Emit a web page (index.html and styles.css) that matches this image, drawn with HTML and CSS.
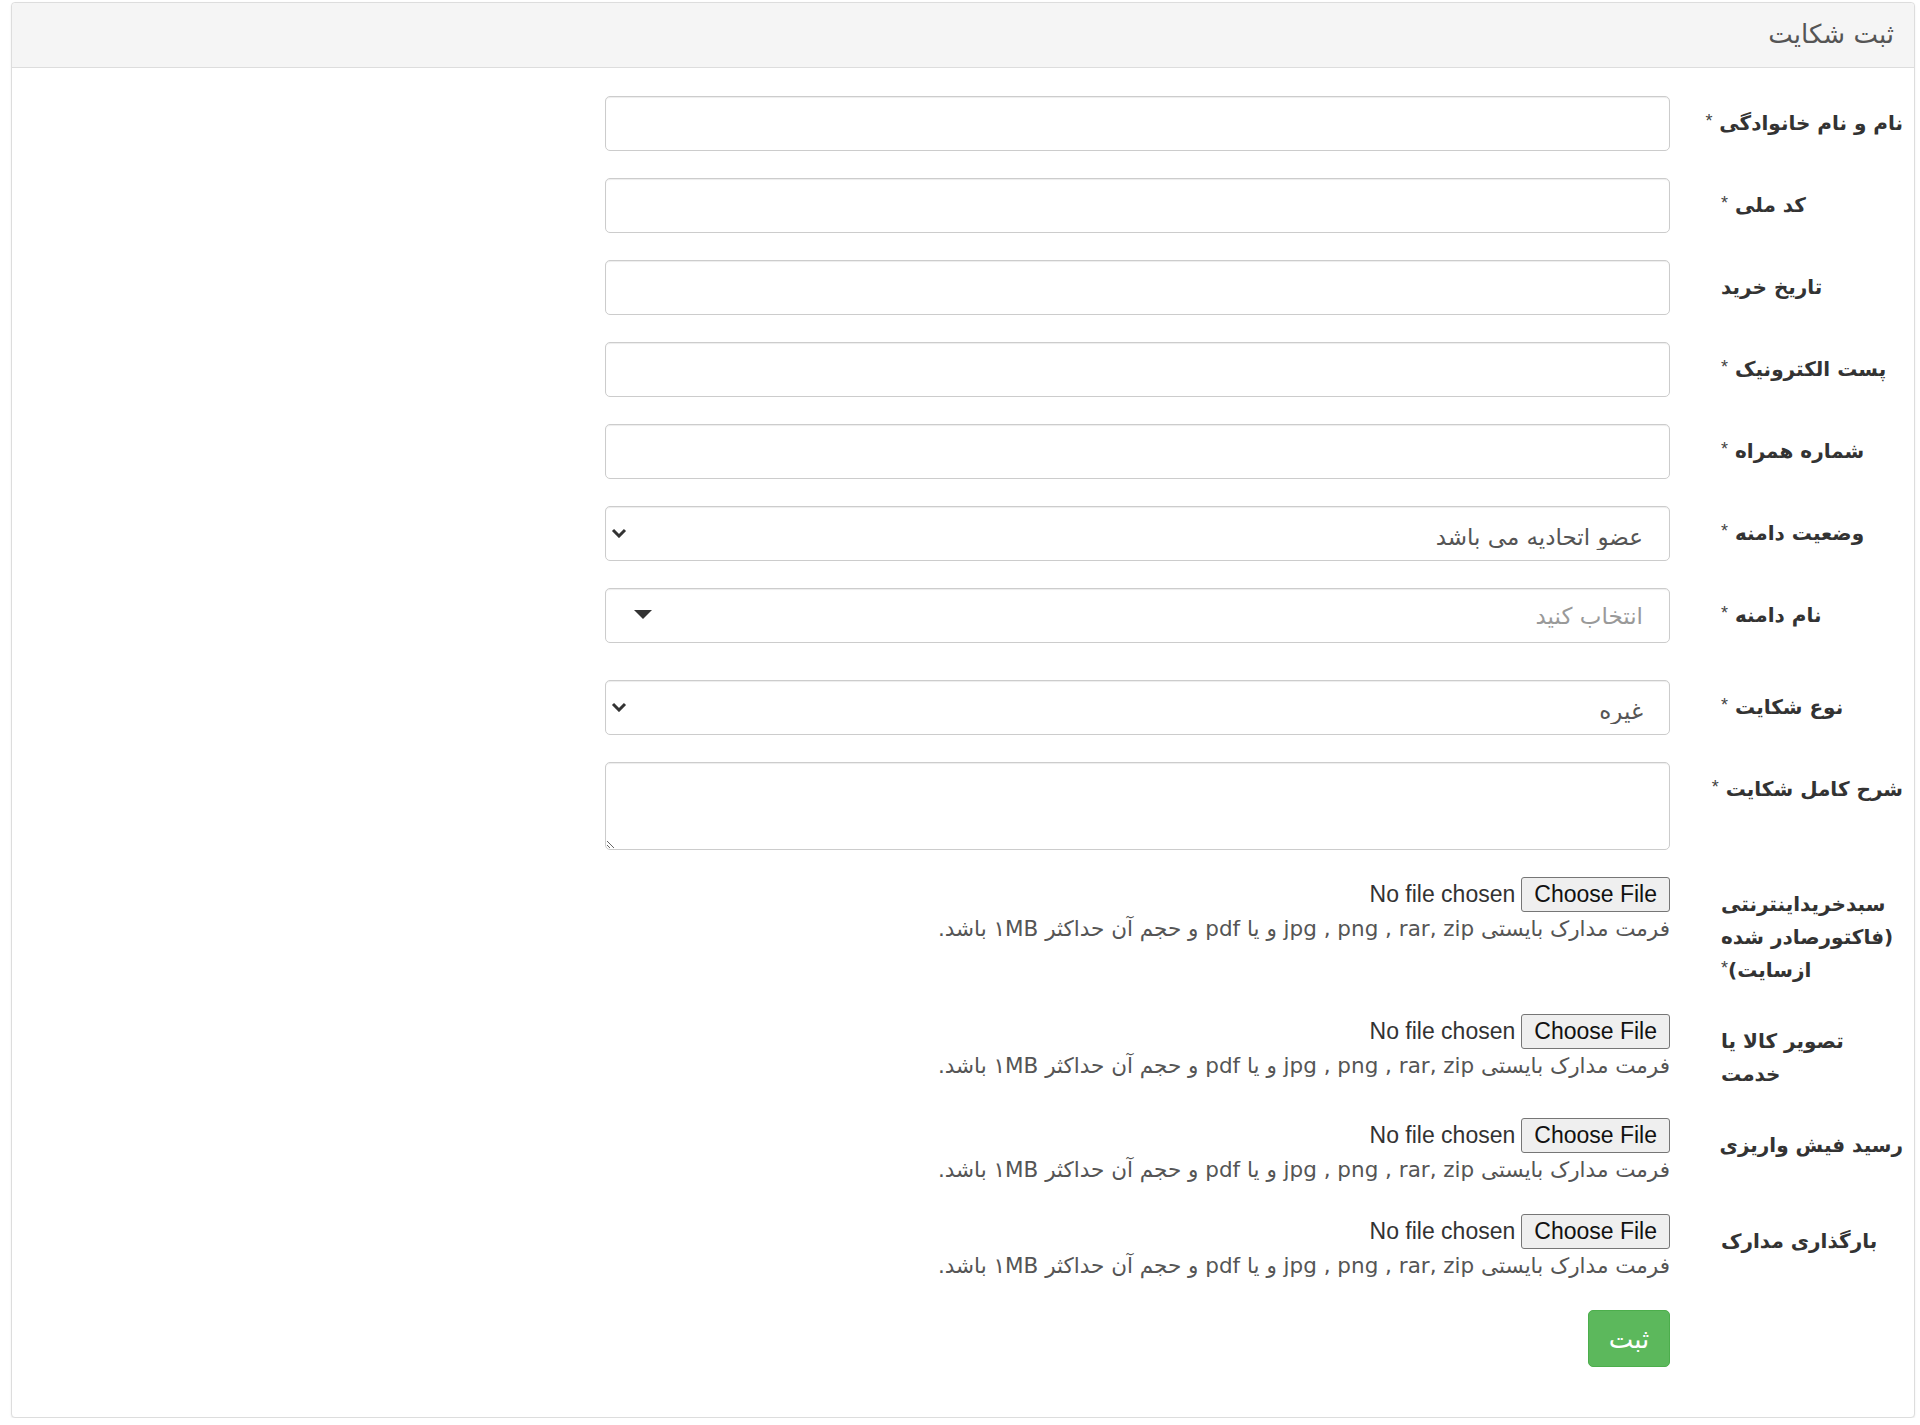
FILE: index.html
```html
<!DOCTYPE html>
<html lang="fa" dir="rtl">
<head>
<meta charset="utf-8">
<title>ثبت شکایت</title>
<link rel="stylesheet" href="styles.css">
</head>
<body>
<div class="panel">
  <div class="panel-heading">ثبت شکایت</div>
  <form class="panel-body">
    <div class="row">
      <label class="label nowrap">نام و نام خانوادگی <span class="req">*</span></label>
      <div class="field"><input class="control" type="text"></div>
    </div>
    <div class="row">
      <label class="label nowrap">کد ملی <span class="req">*</span></label>
      <div class="field"><input class="control" type="text"></div>
    </div>
    <div class="row">
      <label class="label nowrap">تاریخ خرید</label>
      <div class="field"><input class="control" type="text"></div>
    </div>
    <div class="row">
      <label class="label nowrap">پست الکترونیک <span class="req">*</span></label>
      <div class="field"><input class="control" type="text"></div>
    </div>
    <div class="row">
      <label class="label nowrap">شماره همراه <span class="req">*</span></label>
      <div class="field"><input class="control" type="text"></div>
    </div>
    <div class="row">
      <label class="label nowrap">وضعیت دامنه <span class="req">*</span></label>
      <div class="field select-wrap">
        <select class="control select"><option>عضو اتحادیه می باشد</option></select>
        <svg class="chevron" width="16" height="10" viewBox="0 0 16 10"><path d="M2 2 L8 8 L14 2" fill="none" stroke="#333" stroke-width="3"/></svg>
      </div>
    </div>
    <div class="row row-select2">
      <label class="label nowrap">نام دامنه <span class="req">*</span></label>
      <div class="field select-wrap">
        <span class="control select2">انتخاب کنید</span>
        <span class="triangle"></span>
      </div>
    </div>
    <div class="row">
      <label class="label nowrap">نوع شکایت <span class="req">*</span></label>
      <div class="field select-wrap">
        <select class="control select"><option>غیره</option></select>
        <svg class="chevron" width="16" height="10" viewBox="0 0 16 10"><path d="M2 2 L8 8 L14 2" fill="none" stroke="#333" stroke-width="3"/></svg>
      </div>
    </div>
    <div class="row">
      <label class="label nowrap short">شرح کامل شکایت <span class="req">*</span></label>
      <div class="field"><textarea class="control textarea"></textarea></div>
    </div>
    <div class="row">
      <label class="label">سبدخریداینترنتی (فاکتورصادر شده <span class="nowrap">ازسایت)<span class="req">*</span></span></label>
      <div class="field">
        <input class="file" type="file">
        <p class="hint">فرمت مدارک بایستی jpg , png , rar, zip و یا pdf و حجم آن حداکثر ۱MB باشد.</p>
      </div>
    </div>
    <div class="row">
      <label class="label">تصویر کالا یا خدمت</label>
      <div class="field">
        <input class="file" type="file">
        <p class="hint">فرمت مدارک بایستی jpg , png , rar, zip و یا pdf و حجم آن حداکثر ۱MB باشد.</p>
      </div>
    </div>
    <div class="row">
      <label class="label nowrap">رسید فیش واریزی</label>
      <div class="field">
        <input class="file" type="file">
        <p class="hint">فرمت مدارک بایستی jpg , png , rar, zip و یا pdf و حجم آن حداکثر ۱MB باشد.</p>
      </div>
    </div>
    <div class="row">
      <label class="label nowrap">بارگذاری مدارک</label>
      <div class="field">
        <input class="file" type="file">
        <p class="hint">فرمت مدارک بایستی jpg , png , rar, zip و یا pdf و حجم آن حداکثر ۱MB باشد.</p>
      </div>
    </div>
    <div class="row row-last">
      <span class="label"></span>
      <div class="field"><button class="btn-submit" type="button">ثبت</button></div>
    </div>
  </form>
</div>
</body>
</html>
```
FILE: styles.css
```css
html, body {
  margin: 0;
  padding: 0;
  background: #fff;
}
body {
  font-family: "DejaVu Sans", sans-serif;
  color: #333;
}
.panel {
  margin: 2px 5px 0 11px;
  border: 1px solid #ddd;
  border-radius: 4px;
  box-shadow: 0 1px 2px rgba(0, 0, 0, 0.08);
  background: #fff;
}
.panel-heading {
  height: 64px;
  line-height: 62px;
  padding: 0 20px;
  background: #f5f5f5;
  border-bottom: 1px solid #ddd;
  border-radius: 4px 4px 0 0;
  font-size: 26px;
  color: #555;
}
.panel-body {
  padding: 28px 11px 50px 0;
  margin: 0;
}
.row {
  display: grid;
  grid-template-columns: 182px 1065px;
  column-gap: 51px;
  margin-bottom: 27px;
}
.row-select2 {
  margin-bottom: 37px;
}
.row-last {
  margin-bottom: 0;
}
.label {
  padding-top: 11px;
  line-height: 33px;
  font-size: 20px;
  font-weight: bold;
  text-align: left;
  color: #333;
  min-width: 0;
}
.nowrap {
  white-space: nowrap;
}
.short {
  height: 33px;
  align-self: start;
}
.req {
  font-family: "Liberation Sans", sans-serif;
  font-weight: normal;
  font-size: 18px;
  line-height: 1;
  vertical-align: 3px;
  color: #444;
}
.field {
  min-width: 0;
}
.control {
  display: block;
  width: 100%;
  height: 55px;
  box-sizing: border-box;
  border: 1px solid #ccc;
  border-radius: 5px;
  box-shadow: inset 0 1px 1px rgba(0, 0, 0, 0.075);
  background: #fff;
  padding: 0 26px;
  font-family: "DejaVu Sans", sans-serif;
  font-size: 23px;
  color: #555;
  margin: 0;
}
.select-wrap {
  position: relative;
}
.select {
  appearance: none;
  -webkit-appearance: none;
  outline: none;
  padding-top: 7px;
}
.chevron {
  position: absolute;
  left: 6px;
  top: 22px;
}
.select2 {
  line-height: 55px;
  color: #999;
}
.triangle {
  position: absolute;
  left: 29px;
  top: 22px;
  width: 0;
  height: 0;
  border-top: 9px solid #333;
  border-left: 9px solid transparent;
  border-right: 9px solid transparent;
}
.textarea {
  height: 88px;
  padding: 8px 26px;
  resize: both;
}
.file {
  display: block;
  width: 100%;
  height: 35px;
  margin: 0;
  padding: 0;
  font-family: "Liberation Sans", sans-serif;
  font-size: 23px;
  color: #333;
  line-height: 35px;
}
.file::file-selector-button {
  height: 35px;
  padding: 0 12px;
  margin: 0 0 0 6px;
  border: 1px solid #767676;
  border-radius: 3px;
  background: #efefef;
  color: #111;
  font-family: "Liberation Sans", sans-serif;
  font-size: 23px;
}
.hint {
  margin: 0;
  line-height: 34px;
  font-size: 21.5px;
  color: #555;
}
.btn-submit {
  width: 82px;
  height: 57px;
  border: 1px solid #4cae4c;
  border-radius: 5px;
  background: #5cb85c;
  color: #fff;
  font-family: "DejaVu Sans", sans-serif;
  font-size: 26px;
  padding: 0;
  display: block;
}
```
